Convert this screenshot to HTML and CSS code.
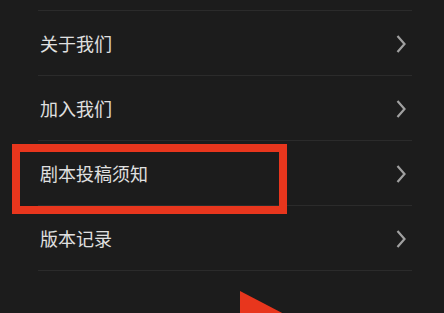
FILE: index.html
```html
<!DOCTYPE html>
<html lang="zh-CN">
<head>
  <meta charset="UTF-8" />
  <meta name="viewport" content="width=device-width, initial-scale=1.0"/>
  <title>设置</title>
  <link rel="stylesheet" href="styles.css">
</head>
<body>
  <div class="page">
    <ul class="menu">
      <li class="menu-cut"></li>
      <li class="menu-item">
        <span>关于我们</span>
        <svg class="chevron" width="10" height="20" viewBox="0 0 10 20"><polyline points="1.5,2 8.5,10 1.5,18"/></svg>
      </li>
      <li class="menu-item">
        <span>加入我们</span>
        <svg class="chevron" width="10" height="20" viewBox="0 0 10 20"><polyline points="1.5,2 8.5,10 1.5,18"/></svg>
      </li>
      <li class="menu-item">
        <span>剧本投稿须知</span>
        <svg class="chevron" width="10" height="20" viewBox="0 0 10 20"><polyline points="1.5,2 8.5,10 1.5,18"/></svg>
      </li>
      <li class="menu-item">
        <span>版本记录</span>
        <svg class="chevron" width="10" height="20" viewBox="0 0 10 20"><polyline points="1.5,2 8.5,10 1.5,18"/></svg>
      </li>
    </ul>

    <div class="highlight"></div>
    <svg class="pointer" width="60" height="30" viewBox="0 0 60 30">
      <polygon points="0,0 46,24 46,30 0,30" fill="#e8361d"/>
    </svg>
  </div>
</body>
</html>
```

FILE: styles.css
```css
body {
  background-color: #1c1c1c;
  color: #e0e0e0;
  font-family: "Noto Sans CJK SC", "Noto Sans", sans-serif;
  margin: 0;
  padding: 0;
}

.page {
  position: relative;
  height: 313px;
  overflow: hidden;
}

.menu {
  list-style: none;
  margin: 0;
  padding: 0 32px 0 38px;
}

.menu-cut {
  height: 10px;
  border-bottom: 1px solid #2b2b2b;
}

.menu-item {
  display: flex;
  align-items: center;
  justify-content: space-between;
  height: 64px;
  padding-left: 2px;
  border-bottom: 1px solid #2b2b2b;
  font-size: 18px;
}

.chevron {
  margin-right: 6px;
  margin-top: 2px;
  fill: none;
  stroke: #a0a0a0;
  stroke-width: 2.2;
}

.highlight {
  position: absolute;
  left: 12px;
  top: 144px;
  width: 259px;
  height: 54px;
  border: 8px solid #e8361d;
}

.pointer {
  position: absolute;
  left: 240px;
  top: 291px;
}
```
